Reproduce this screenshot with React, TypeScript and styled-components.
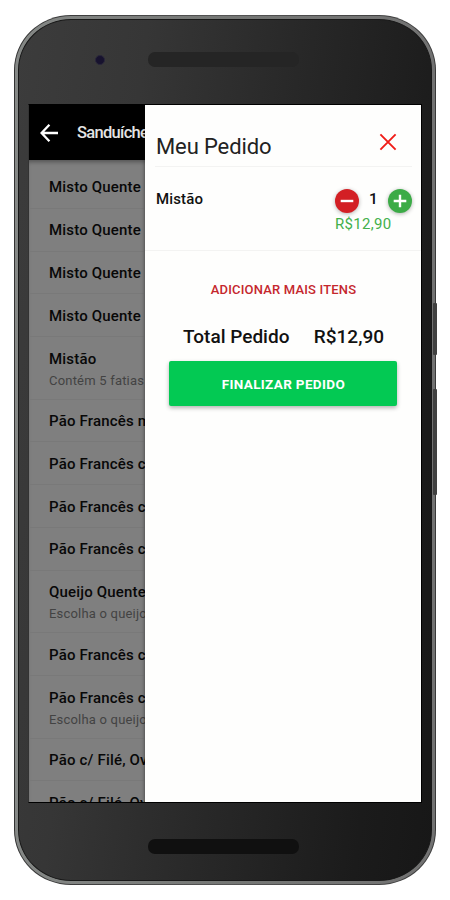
import React from 'react';
import styled, { createGlobalStyle } from 'styled-components';

const GlobalStyle = createGlobalStyle`
  * { box-sizing: border-box; }
  body { margin: 0; background: #fff; font-family: Roboto, "Liberation Sans", sans-serif; color: #111; }
  button { border: 0; padding: 0; background: none; font-family: inherit; }
  svg { flex: none; }
`;

const Stage = styled.main`
  width: 450px;
  height: 900px;
  padding: 15px 0 0 14px;
  overflow: hidden;
`;

const Phone = styled.div`
  position: relative;
  width: 422px;
  height: 870px;
  padding: 1px;
  border-radius: 57px / 55px;
  background: linear-gradient(90deg, #333, #555 50%, #3a3a3a);
`;

const Rim = styled.div`
  height: 100%;
  padding: 3px;
  border-radius: 56px / 54px;
  background: linear-gradient(90deg, #858886, #747674 50%, #727272);
`;

const Body = styled.div`
  height: 100%;
  display: flex;
  flex-direction: column;
  border: 1px solid #181818;
  border-radius: 53px / 51px;
  background: linear-gradient(97deg, #3c3c3c 0%, #363636 25%, #282828 55%, #1b1b1b 85%, #171717 100%);
`;

const SideKey = styled.span<{ $top: number; $height: number }>`
  position: absolute;
  right: -1px;
  top: ${p => p.$top}px;
  width: 4px;
  height: ${p => p.$height}px;
  border-radius: 1px;
  background: #414141;
`;

const TopBezel = styled.div`
  height: 84px;
  flex: none;
  display: flex;
  align-items: flex-start;
  padding: 32px 0 0 76px;
`;

const Camera = styled.span`
  width: 10px;
  height: 10px;
  margin-top: 3px;
  border-radius: 50%;
  background: #17122e;
  border: 1px solid #29263a;
`;

const Speaker = styled.span<{ $dark?: boolean }>`
  width: 151px;
  height: 15px;
  border-radius: 7px;
  background: ${p => (p.$dark ? '#101010' : '#252525')};
`;

const TopSpeaker = styled(Speaker)`
  margin-left: 43px;
`;

const BottomBezel = styled.div`
  flex: 1;
  padding: 36px 0 0 129px;
  display: flex;
`;

const Screen = styled.div`
  width: 394px;
  height: 699px;
  flex: none;
  margin-left: 9px;
  display: flex;
  overflow: hidden;
  border: 1px solid #000;
  border-left-color: #333;
  background: #7f7f7f;
`;

const MenuPage = styled.section`
  width: 116px;
  flex: none;
  overflow: hidden;
  white-space: nowrap;
`;

const AppBar = styled.header`
  height: 55px;
  padding-left: 10px;
  display: flex;
  align-items: center;
  background: #000;
  color: #e4e4e4;
`;

const AppTitle = styled.h1`
  margin: 0 0 0 18px;
  font-size: 16.5px;
  font-weight: 500;
  letter-spacing: -0.7px;
`;

const MenuList = styled.ul`
  list-style: none;
  margin: 0;
  padding: 6px 0 0;
  box-shadow: inset 0 4px 4px -2px rgba(0, 0, 0, 0.35);
`;

const MenuRow = styled.li<{ $tall: boolean }>`
  height: ${p => (p.$tall ? 62.5 : 42.8)}px;
  padding: 12.4px 0 0 20px;
  border-bottom: 1px solid #797979;
`;

const RowTitle = styled.div`
  font-size: 15px;
  line-height: 18px;
  font-weight: 500;
  letter-spacing: 0.18px;
  color: #080808;
`;

const RowNote = styled.div`
  margin-top: 5px;
  font-size: 13px;
  line-height: 16px;
  letter-spacing: 0.2px;
  color: #434343;
`;

const Drawer = styled.aside`
  flex: 1;
  min-width: 0;
  background: #fefefd;
  box-shadow: 0 0 4px rgba(0, 0, 0, 0.45);
  z-index: 1;
`;

const DrawerHead = styled.div`
  height: 62px;
  margin: 0 9px 0 10px;
  padding: 17px 15px 0 1px;
  display: flex;
  justify-content: space-between;
  align-items: flex-start;
  border-bottom: 1px solid #f3f3f2;
`;

const DrawerTitle = styled.h2`
  margin: 12px 0 0;
  font-size: 22px;
  line-height: 26px;
  font-weight: 400;
  letter-spacing: -0.12px;
  color: #222;
`;

const CloseButton = styled.button`
  width: 18px;
  height: 18px;
  margin-top: 11px;
  display: flex;
`;

const Item = styled.div`
  height: 84px;
  padding: 22px 9px 0 11px;
  display: flex;
  justify-content: space-between;
  border-bottom: 1px solid #f3f3f2;
`;

const ItemName = styled.div`
  margin-top: 1px;
  font-size: 15px;
  line-height: 18px;
  font-weight: 500;
  letter-spacing: 0.15px;
`;

const ItemSide = styled.div`
  width: 77px;
`;

const Stepper = styled.div`
  display: flex;
  align-items: center;
  justify-content: space-between;
  height: 24px;
`;

const RoundButton = styled.button<{ $color: string }>`
  width: 24px;
  height: 24px;
  border-radius: 50%;
  display: flex;
  align-items: center;
  justify-content: center;
  background: ${p => p.$color};
  box-shadow: 0 1px 4px rgba(0, 0, 0, 0.3);
`;

const Quantity = styled.span`
  font-size: 15.5px;
  font-weight: 500;
  line-height: 18px;
  margin-bottom: 4px;
`;

const ItemPrice = styled.div`
  margin-top: 1px;
  font-size: 15px;
  line-height: 20px;
  letter-spacing: 0.3px;
  color: #43b04b;
`;

const AddMore = styled.button`
  display: block;
  width: 100%;
  padding-left: 1px;
  margin-top: 30px;
  font-size: 13px;
  line-height: 18px;
  font-weight: 500;
  letter-spacing: 0.17px;
  color: #c5272d;
`;

const TotalRow = styled.div`
  margin-top: 26px;
  padding: 0 37px 0 38px;
  display: flex;
  justify-content: space-between;
  font-size: 19px;
  line-height: 24px;
  font-weight: 500;
`;

const FinishButton = styled.button`
  display: block;
  width: 228px;
  height: 45px;
  margin: 12px 0 0 24.4px;
  border-radius: 2px;
  background: #03c953;
  color: #fff;
  font-size: 13.5px;
  font-weight: 700;
  letter-spacing: 0.35px;
  box-shadow: 0 2px 4px rgba(0, 0, 0, 0.3);
`;

const menu: { title: string; note?: string }[] = [
  { title: 'Misto Quente' },
  { title: 'Misto Quente' },
  { title: 'Misto Quente' },
  { title: 'Misto Quente' },
  { title: 'Mistão', note: 'Contém 5 fatias' },
  { title: 'Pão Francês m' },
  { title: 'Pão Francês c' },
  { title: 'Pão Francês c' },
  { title: 'Pão Francês c' },
  { title: 'Queijo Quente', note: 'Escolha o queijo' },
  { title: 'Pão Francês c' },
  { title: 'Pão Francês c', note: 'Escolha o queijo' },
  { title: 'Pão c/ Filé, Ovo' },
  { title: 'Pão c/ Filé, Ovo' },
];

const BackIcon = () => (
  <svg width="20" height="20" viewBox="0 0 20 20" fill="none" stroke="#fff" strokeWidth="2.3">
    <path d="M10.4 1.8 2.6 10l7.8 8.2M2.6 10H19" />
  </svg>
);

const CloseIcon = () => (
  <svg width="18" height="18" viewBox="0 0 18 18" stroke="#f01c17" strokeWidth="1.9">
    <path d="M1.4 1.4 16.6 16.6M16.6 1.4 1.4 16.6" />
  </svg>
);

const SignIcon = ({ plus }: { plus?: boolean }) => (
  <svg width="14" height="14" viewBox="0 0 14 14" stroke="#fff" strokeWidth="2.4">
    <path d={plus ? 'M.7 7h12.6M7 .7v12.6' : 'M.7 7h12.6'} />
  </svg>
);

export default function App() {
  return (
    <>
      <GlobalStyle />
      <Stage>
        <Phone>
          <Rim>
            <Body>
              <TopBezel>
                <Camera />
                <TopSpeaker />
              </TopBezel>
              <Screen>
                <MenuPage>
                  <AppBar>
                    <BackIcon />
                    <AppTitle>Sanduíches</AppTitle>
                  </AppBar>
                  <MenuList>
                    {menu.map((m, i) => (
                      <MenuRow key={i} $tall={!!m.note}>
                        <RowTitle>{m.title}</RowTitle>
                        {m.note && <RowNote>{m.note}</RowNote>}
                      </MenuRow>
                    ))}
                  </MenuList>
                </MenuPage>
                <Drawer>
                  <DrawerHead>
                    <DrawerTitle>Meu Pedido</DrawerTitle>
                    <CloseButton aria-label="Fechar"><CloseIcon /></CloseButton>
                  </DrawerHead>
                  <Item>
                    <ItemName>Mistão</ItemName>
                    <ItemSide>
                      <Stepper>
                        <RoundButton $color="#d31f24" aria-label="Remover"><SignIcon /></RoundButton>
                        <Quantity>1</Quantity>
                        <RoundButton $color="#3cab47" aria-label="Adicionar"><SignIcon plus /></RoundButton>
                      </Stepper>
                      <ItemPrice>R$12,90</ItemPrice>
                    </ItemSide>
                  </Item>
                  <AddMore>ADICIONAR MAIS ITENS</AddMore>
                  <TotalRow>
                    <span>Total Pedido</span>
                    <span>R$12,90</span>
                  </TotalRow>
                  <FinishButton>FINALIZAR PEDIDO</FinishButton>
                </Drawer>
              </Screen>
              <BottomBezel>
                <Speaker $dark />
              </BottomBezel>
            </Body>
          </Rim>
          <SideKey $top={288} $height={52} />
          <SideKey $top={374} $height={106} />
        </Phone>
      </Stage>
    </>
  );
}
